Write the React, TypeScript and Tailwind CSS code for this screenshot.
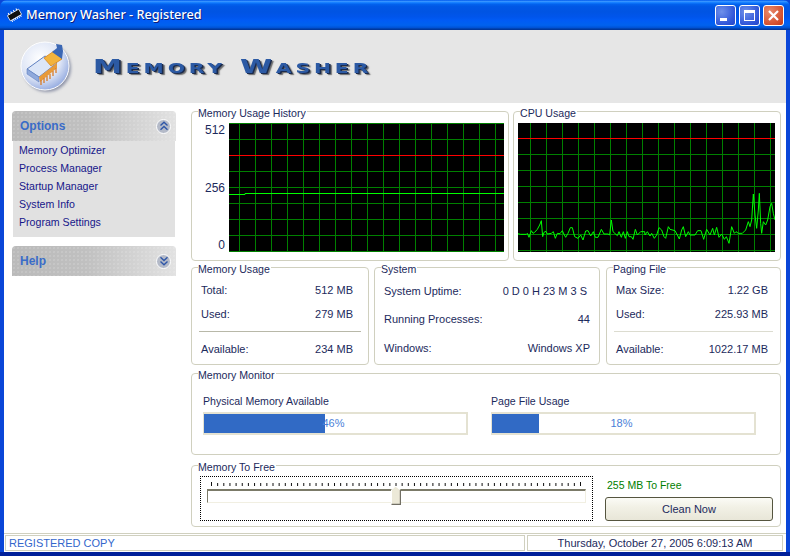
import React from "react";

function Box({ title, className, children }: { title: string; className: string; children?: React.ReactNode }) {
  return (
    <div className={`relative rounded-[4px] border border-[#d0d0bf] ${className}`}>
      <span className="absolute left-[6px] top-[-5px] bg-white pr-[1px] text-[10.6px] leading-[13px] text-[#1c2a5c]">{title}</span>
      {children}
    </div>
  );
}

const crop1 = [[0,131],[8,133],[25,133],[28,130],[33,142],[40,122],[45,130],[50,127],[58,118],[65,105],[70,92],[74,140],[78,127],[84,124],[88,132],[100,130],[106,125],[112,145],[118,130],[126,131],[133,122],[139,135],[143,142],[150,130],[157,113],[163,113],[170,140],[180,145],[188,135],[195,150],[203,123],[210,122],[218,138],[226,125],[232,142],[240,142],[250,118],[258,132],[270,132],[275,135],[280,90],[285,125],[298,137],[303,125],[310,142],[316,125],[322,145],[328,125],[333,140],[340,140],[345,148],[352,118],[358,135],[368,125],[380,125]];
const crop2 = [[0,135],[7,125],[15,138],[20,130],[28,145],[35,135],[42,113],[50,120],[57,140],[62,145],[70,110],[75,118],[90,122],[97,135],[103,147],[110,120],[115,110],[122,140],[130,125],[135,135],[150,135],[158,122],[168,122],[176,148],[185,118],[195,135],[203,115],[208,135],[215,112],[222,142],[230,132],[238,148],[244,140],[252,160],[260,110],[268,130],[273,125],[280,130],[292,130],[302,120],[310,95],[315,110],[320,90],[325,12],[330,75],[335,115],[340,60],[343,10],[347,100],[350,130],[355,95],[362,105],[368,90],[375,50],[380,40],[385,70],[390,90]];
const cpuPoints = [
  ...crop1.map(([x, y]) => `${518 + x / 3},${190 + y / 3}`),
  ...crop2.map(([x, y]) => `${645 + x / 3},${190 + y / 3}`),
].join(" ");

function MemoryChart() {
  return (
    <svg width="275" height="129" viewBox="229 123 275 129" className="block bg-black">
      {Array.from({ length: 17 }, (_, i) => <line key={i} x1={239.5 + i * 16} x2={239.5 + i * 16} y1="123" y2="252" stroke="#008000" />)}
      {[123.5, 139.5, 171.5, 187.5, 203.5, 219.5, 235.5, 251.5].map((y) => <line key={y} x1="229" x2="504" y1={y} y2={y} stroke="#008000" />)}
      <line x1="229" x2="504" y1="155.5" y2="155.5" stroke="#ff0000" />
      <path d="M229 194.5H245V193.5H504" fill="none" stroke="#00ff00" />
    </svg>
  );
}

function CpuChart() {
  return (
    <svg width="257" height="129" viewBox="518 123 257 129" className="block bg-black">
      {Array.from({ length: 16 }, (_, i) => <line key={i} x1={530.5 + i * 16} x2={530.5 + i * 16} y1="123" y2="252" stroke="#008000" />)}
      {[154.5, 170.5, 186.5, 202.5, 218.5, 234.5, 250.5].map((y) => <line key={y} x1="518" x2="775" y1={y} y2={y} stroke="#008000" />)}
      <line x1="518" x2="775" y1="138.5" y2="138.5" stroke="#ff0000" />
      <polyline points={cpuPoints} fill="none" stroke="#00ff00" strokeWidth="1" />
    </svg>
  );
}

function Row({ label, value, className }: { label: string; value: string; className: string }) {
  return (
    <div className={`flex items-center justify-between text-[11px] leading-[13px] text-[#1c2a5c] ${className}`}>
      <span>{label}</span>
      <span>{value}</span>
    </div>
  );
}

function Bar({ label, pct, fill }: { label: string; pct: string; fill: string }) {
  return (
    <div className="flex w-[265px] flex-col">
      <span className="mb-[4px] text-[10.6px] leading-[13px] text-[#1c2a5c]">{label}</span>
      <div className="relative h-[23px] border-y-2 border-l border-r-2 border-[#e4e2d2] bg-white">
        <div className={`h-full bg-[#316ac5] ${fill}`} />
        <span className="absolute inset-0 flex items-center justify-center pr-[3px] text-[11px] text-[#4a80d8]">{pct}</span>
      </div>
    </div>
  );
}

function SideHead({ title, up }: { title: string; up?: boolean }) {
  return (
    <div className="flex h-[30px] items-center justify-between rounded-t-[4px] bg-[radial-gradient(rgba(255,255,255,0.14)_0.7px,transparent_0.9px),linear-gradient(90deg,#bababa,#c0c0c0_45%,#e2e2e2)] bg-[length:4px_4px,100%_100%] pl-[8px] pr-[5px]">
      <span className="text-[12px] font-bold text-[#3a6cc8]">{title}</span>
      <span className="flex h-[15px] w-[15px] items-center justify-center rounded-full border border-white bg-[#b4bac8]">
        <svg width="10" height="10" viewBox="0 0 10 10" fill="none" stroke="#2f57a8" strokeWidth="1.4">
          {up ? <path d="M1.5 4.5L5 1.2L8.5 4.5M1.5 8.7L5 5.4L8.5 8.7" /> : <path d="M1.5 1.3L5 4.6L8.5 1.3M1.5 5.5L5 8.8L8.5 5.5" />}
        </svg>
      </span>
    </div>
  );
}

function WinBtn({ className, children }: { className: string; children: React.ReactNode }) {
  return <div className={`flex h-[21px] w-[21px] items-center justify-center rounded-[3px] border border-white ${className}`}>{children}</div>;
}

const blueBtn = "bg-[radial-gradient(circle_at_30%_30%,#6e90ea,#2f55d8_70%,#2447c8)]";

export default function App() {
  return (
    <div className="flex h-[556px] w-[790px] flex-col overflow-hidden bg-[#0a46d8] font-['Liberation_Sans',sans-serif]">
      {/* title bar */}
      <div className="flex h-[30px] shrink-0 items-center rounded-t-[7px] bg-[linear-gradient(180deg,#0058ee_0%,#3593ff_5%,#127dff_9%,#0262ee_14%,#0057e5_22%,#0054e3_40%,#0055eb_56%,#005bf5_68%,#0062ef_84%,#0052d6_92%,#0040ab_96%,#003092_100%)] pl-[7px] pr-[6px]">
        <svg width="15" height="14" viewBox="0 0 15 14" className="mr-[4px]">
          <g transform="rotate(-30 7.5 7)">
            <rect x="1" y="4" width="13" height="6" fill="#101010" stroke="#fff" strokeWidth="0.7" />
            <path d="M2.5 10v2M4.5 10v2M6.5 10v2M8.5 10v2M10.5 10v2M12.5 10v2M3 2v2M6 2v2M9 2v2M12 2v2" stroke="#fff" strokeWidth="1" />
          </g>
        </svg>
        <span className="font-['Noto_Sans',sans-serif] text-[12.7px] font-medium text-white [text-shadow:1px_1px_0_#0f1f7a]">Memory Washer - Registered</span>
        <div className="ml-auto flex gap-[3px]">
          <WinBtn className={blueBtn}><span className="mt-[9px] mr-[4px] h-[3px] w-[7px] bg-white" /></WinBtn>
          <WinBtn className={blueBtn}><span className="h-[11px] w-[11px] border border-t-[3px] border-white" /></WinBtn>
          <WinBtn className="bg-[radial-gradient(circle_at_30%_30%,#e88a6c,#d4502e_70%,#c23a1c)]">
            <svg width="13" height="13" viewBox="0 0 13 13" stroke="#fff" strokeWidth="2.2"><path d="M2 2L11 11M11 2L2 11" /></svg>
          </WinBtn>
        </div>
      </div>

      <div className="mx-[4px] flex h-[522px] shrink-0 flex-col bg-white">
        {/* header */}
        <div className="flex h-[73px] shrink-0 items-center bg-[#e6e6e6] pl-[13px]">
          <svg width="58" height="60" viewBox="0 0 58 60" className="mb-[2px] mr-[20px] shrink-0">
            <defs>
              <radialGradient id="orb" cx="40%" cy="35%" r="70%">
                <stop offset="0%" stopColor="#ffffff" />
                <stop offset="60%" stopColor="#dfe6f6" />
                <stop offset="100%" stopColor="#8ea6de" />
              </radialGradient>
              <filter id="soft"><feGaussianBlur stdDeviation="1.6" /></filter>
            </defs>
            <circle cx="30" cy="32" r="24" fill="#8f94a8" filter="url(#soft)" />
            <circle cx="28" cy="30" r="24" fill="url(#orb)" stroke="#ffffff" strokeWidth="1" />
            <path d="M10 33L28 20L40 27L22 41Z" fill="#dce6f8" stroke="#5f80c0" />
            <path d="M10 33V38L22 46V41Z" fill="#8fa9dc" stroke="#5f80c0" strokeWidth="0.6" />
            <path d="M22 41L40 27V32L23 46Z" fill="#e89a3a" />
            <path d="M24 49V44M27 47V42M30 45V40M33 43V38M36 40V35M39 37V32" stroke="#d67c2a" strokeWidth="1.3" />
            <path d="M27 22L37 15L45 23L34 30Z" fill="#f3b33c" stroke="#d8861e" strokeWidth="0.8" />
            <path d="M35 16L40 12L39 8L45 9L46 15L45 23Z" fill="#3b67b4" />
          </svg>
          <span className="mb-[2px] ml-[-2px] inline-block origin-left scale-x-[1.45] font-['DejaVu_Sans',sans-serif] text-[20px] font-bold leading-none tracking-[2.7px] text-[#2c5aa4] [font-variant:small-caps] [text-shadow:1px_1px_0_#1a2a4c,2px_2px_1px_#666]">Memory Washer</span>
        </div>

        {/* body */}
        <div className="flex min-h-0 flex-1">
          {/* sidebar */}
          <div className="flex w-[187px] shrink-0 flex-col pl-[8px] pr-[15px] pt-[8px]">
            <SideHead title="Options" up />
            <div className="mx-[1px] flex h-[96px] flex-col gap-[5px] bg-[#e1e1e1] pl-[6px] pt-[3px] text-[10.6px] leading-[13px] text-[#16168a]">
              <span>Memory Optimizer</span>
              <span>Process Manager</span>
              <span>Startup Manager</span>
              <span>System Info</span>
              <span>Program Settings</span>
            </div>
            <div className="mt-[9px]"><SideHead title="Help" /></div>
          </div>

          {/* main */}
          <div className="flex w-[590px] shrink-0 flex-col pt-[8px]">
            <div className="flex h-[150px] gap-[4px]">
              <Box title="Memory Usage History" className="w-[318px]">
                <div className="flex pt-[11px]">
                  <div className="flex h-[129px] w-[37px] flex-col items-end justify-between pr-[4px] pt-[1px] text-[12px] leading-[13px] text-[#1c2a5c]">
                    <span>512</span><span>256</span><span>0</span>
                  </div>
                  <MemoryChart />
                </div>
              </Box>
              <Box title="CPU Usage" className="w-[268px]">
                <div className="pl-[4px] pt-[11px]"><CpuChart /></div>
              </Box>
            </div>

            <div className="mt-[6px] flex h-[98px]">
              <Box title="Memory Usage" className="w-[178px] px-[9px] pt-[16px]">
                <Row label="Total:" value="512 MB" className="pr-[6px]" />
                <Row label="Used:" value="279 MB" className="mt-[11px] pr-[6px]" />
                <div className="-mx-[2px] mt-[10px] border-t border-[#b8b8a8]" />
                <Row label="Available:" value="234 MB" className="mt-[11px] pr-[6px]" />
              </Box>
              <Box title="System" className="ml-[5px] w-[226px] px-[9px] pt-[17px]">
                <Row label="System Uptime:" value="0 D 0 H 23 M 3 S" className="pr-[3px]" />
                <Row label="Running Processes:" value="44" className="mt-[15px]" />
                <Row label="Windows:" value="Windows XP" className="mt-[16px]" />
              </Box>
              <Box title="Paging File" className="ml-[6px] w-[175px] px-[9px] pt-[16px]">
                <Row label="Max Size:" value="1.22 GB" className="pr-[3px]" />
                <Row label="Used:" value="225.93 MB" className="mt-[11px] pr-[3px]" />
                <div className="-mx-[2px] mt-[10px] border-t border-[#dcdcd0]" />
                <Row label="Available:" value="1022.17 MB" className="mt-[11px] pr-[3px]" />
              </Box>
            </div>

            <Box title="Memory Monitor" className="mt-[8px] flex h-[82px] gap-[23px] pl-[11px] pt-[21px]">
              <Bar label="Physical Memory Available" pct="46%" fill="w-[46%]" />
              <Bar label="Page File Usage" pct="18%" fill="w-[18%]" />
            </Box>

            <Box title="Memory To Free" className="mt-[10px] flex h-[62px] pl-[8px] pt-[10px]">
              <div className="flex h-[45px] w-[393px] shrink-0 flex-col border border-dotted border-black px-[6px] pt-[5px]">
                <svg width="379" height="5" viewBox="0 0 379 5" className="block">
                  {Array.from({ length: 61 }, (_, i) => <line key={i} x1={4.5 + i * 6.15} x2={4.5 + i * 6.15} y1={i === 0 || i === 60 ? 0 : 1} y2="4" stroke="#101010" />)}
                </svg>
                <div className="relative mt-[2px] h-[14px] w-[379px] border border-t-2 border-b-[#f1efe2] border-l-[#7b7a68] border-r-[#f1efe2] border-t-[#7b7a68]">
                  <svg width="10" height="19" viewBox="0 0 10 19" className="absolute left-[183px] top-[-5px]">
                    <path d="M0.5 18.5V4L4 0.5H5L9.5 4V18.5Z" fill="#ece9d8" stroke="#ffffff" />
                    <path d="M9.5 4V18.5H0.5" fill="none" stroke="#716f64" strokeWidth="1.4" />
                  </svg>
                </div>
              </div>
              <div className="ml-[12px] flex flex-col">
                <span className="ml-[2px] mt-[3px] text-[10.5px] leading-[13px] text-[#008000]">255 MB To Free</span>
                <div className="mt-[5px] flex h-[24px] w-[168px] items-center justify-center rounded-[3px] border border-[#55553f] bg-[linear-gradient(180deg,#fbfbf6,#f2f1e6_40%,#e8e6d8)] text-[11px] text-[#1c2a5c]">Clean Now</div>
              </div>
            </Box>
          </div>
        </div>

        {/* status bar */}
        <div className="flex h-[19px] shrink-0 gap-[2px] border-t border-[#d0d0bf] pl-[1px] pr-[3px] pt-[1px]">
          <div className="flex h-[16px] w-[520px] items-center border border-[#d0d0bf] pl-[3px] text-[11px] text-[#3366cc]">REGISTERED COPY</div>
          <div className="flex h-[16px] flex-1 items-center justify-center border border-[#d0d0bf] text-[11px] text-[#1c2a5c]">Thursday, October 27, 2005 6:09:13 AM</div>
        </div>
      </div>
      <div className="h-[4px] shrink-0 bg-[#00209a]" />
    </div>
  );
}
